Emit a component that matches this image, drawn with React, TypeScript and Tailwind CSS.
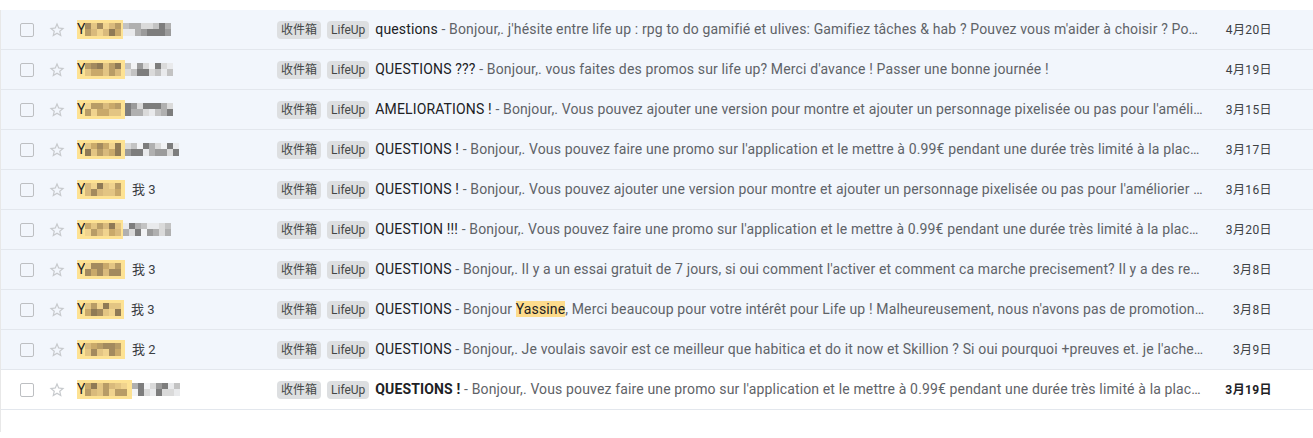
import React from "react";

interface Mail {
  hl: number;
  total: number;
  me?: string;
  subject: string;
  snippet: React.ReactNode;
  date: string;
  unread?: boolean;
}

const mails: Mail[] = [
  {
    hl: 46,
    total: 97,
    subject: "questions",
    snippet:
      "Bonjour,. j'hésite entre life up : rpg to do gamifié et ulives: Gamifiez tâches & hab ? Pouvez vous m'aider à choisir ? Pour ma part je ne sais pas",
    date: "4月20日",
  },
  {
    hl: 48,
    total: 97,
    subject: "QUESTIONS ???",
    snippet: "Bonjour,. vous faites des promos sur life up? Merci d'avance ! Passer une bonne journée !",
    date: "4月19日",
  },
  {
    hl: 48,
    total: 97,
    subject: "AMELIORATIONS !",
    snippet:
      "Bonjour,. Vous pouvez ajouter une version pour montre et ajouter un personnage pixelisée ou pas pour l'amélioration du jeu merci",
    date: "3月15日",
  },
  {
    hl: 48,
    total: 102,
    subject: "QUESTIONS !",
    snippet:
      "Bonjour,. Vous pouvez faire une promo sur l'application et le mettre à 0.99€ pendant une durée très limité à la place de 4.99€ merci",
    date: "3月17日",
  },
  {
    hl: 48,
    total: 48,
    me: "我 3",
    subject: "QUESTIONS !",
    snippet:
      "Bonjour,. Vous pouvez ajouter une version pour montre et ajouter un personnage pixelisée ou pas pour l'améliorier merci beaucoup",
    date: "3月16日",
  },
  {
    hl: 46,
    total: 97,
    subject: "QUESTION !!!",
    snippet:
      "Bonjour,. Vous pouvez faire une promo sur l'application et le mettre à 0.99€ pendant une durée très limité à la place de 4.99€ merci",
    date: "3月20日",
  },
  {
    hl: 48,
    total: 48,
    me: "我 3",
    subject: "QUESTIONS",
    snippet:
      "Bonjour,. Il y a un essai gratuit de 7 jours, si oui comment l'activer et comment ca marche precisement? Il y a des recompenses",
    date: "3月8日",
  },
  {
    hl: 47,
    total: 47,
    me: "我 3",
    subject: "QUESTIONS",
    snippet: (
      <>
        Bonjour <span className="bg-[#fddc8c] text-[#202124]">Yassine</span>, Merci beaucoup pour votre intérêt pour
        Life up ! Malheureusement, nous n'avons pas de promotion en ce moment
      </>
    ),
    date: "3月8日",
  },
  {
    hl: 48,
    total: 48,
    me: "我 2",
    subject: "QUESTIONS",
    snippet:
      "Bonjour,. Je voulais savoir est ce meilleur que habitica et do it now et Skillion ? Si oui pourquoi +preuves et. je l'acheterai merci",
    date: "3月9日",
  },
  {
    hl: 55,
    total: 108,
    subject: "QUESTIONS !",
    snippet:
      "Bonjour,. Vous pouvez faire une promo sur l'application et le mettre à 0.99€ pendant une durée très limité à la place de 4.99€ merci",
    date: "3月19日",
    unread: true,
  },
];

const warm = ["#c9a96a", "#b89c66", "#d9ba7c", "#a38a5e", "#e3c583", "#8f7a55", "#f0d38e"];
const cool = ["#9b9b9b", "#c3c3c3", "#7d7d7d", "#dadada", "#e9eaec", "#b0b0b0", "#f2f3f5"];

const seeded = (seed: number) => {
  let s = seed * 7919 + 13;
  return () => {
    s = (s * 9301 + 49297) % 233280;
    return s / 233280;
  };
};

const Cells = ({ count, palette, rnd }: { count: number; palette: string[]; rnd: () => number }) => (
  <>
    {Array.from({ length: count }).map((_, i) => (
      <div key={i} className="flex w-[6px] flex-col">
        <div className="h-[6px]" style={{ backgroundColor: palette[Math.floor(rnd() * palette.length)] }} />
        <div className="h-[7px]" style={{ backgroundColor: palette[Math.floor(rnd() * palette.length)] }} />
      </div>
    ))}
  </>
);

const Sender = ({ mail, idx }: { mail: Mail; idx: number }) => {
  const rnd = seeded(idx + 1);
  const inner = Math.floor((mail.hl - 8) / 6);
  const outer = Math.floor((mail.total - mail.hl) / 6);
  return (
    <div className="flex w-[200px] shrink-0 items-center text-[14px] text-[#202124]">
      <div className="flex h-[19px] items-center bg-[#fde293]" style={{ width: mail.hl }}>
        <span>Y</span>
        <Cells count={inner} palette={warm} rnd={rnd} />
      </div>
      {outer > 0 && (
        <div className="flex items-center">
          <Cells count={outer} palette={cool} rnd={rnd} />
        </div>
      )}
      {mail.me && <span className="ml-[7px] text-[13px] text-[#3c4043]">{mail.me}</span>}
    </div>
  );
};

const StarOutline = () => (
  <svg viewBox="0 0 24 24" className="h-[18px] w-[18px] shrink-0" fill="#c7cacd">
    <path d="M22 9.24l-7.19-.62L12 2 9.19 8.63 2 9.24l5.46 4.73L5.82 21 12 17.27 18.18 21l-1.63-7.03L22 9.24zM12 15.4l-3.76 2.27 1-4.28-3.32-2.88 4.38-.38L12 6.1l1.71 4.04 4.38.38-3.32 2.88 1 4.28L12 15.4z" />
  </svg>
);

const Chip = ({ children }: { children: React.ReactNode }) => (
  <span className="flex h-[18px] shrink-0 items-center rounded-[4px] bg-[#dddfe1] px-1 text-[12px] text-[#444746]">
    {children}
  </span>
);

const Row = ({ mail, idx }: { mail: Mail; idx: number }) => (
  <div
    className={`flex h-10 items-center border-b border-[#e3e7ed] pl-[19px] pr-[41px] ${
      mail.unread ? "bg-white" : "bg-[#f2f6fc]"
    }`}
  >
    <div className="h-[14px] w-[14px] shrink-0 rounded-[2px] border-[1.5px] border-[#bdbfc2]" />
    <div className="ml-[14px]">
      <StarOutline />
    </div>
    <div className="ml-[11px]">
      <Sender mail={mail} idx={idx} />
    </div>
    <div className="flex shrink-0 items-center gap-[6px]">
      <Chip>收件箱</Chip>
      <Chip>LifeUp</Chip>
    </div>
    <div className="ml-[6px] min-w-0 flex-1 truncate text-[14px] tracking-[0.14px] text-[#5f6368]">
      <span className={`text-[#202124] ${mail.unread ? "font-bold" : ""}`}>{mail.subject}</span> - {mail.snippet}
    </div>
    <div
      className={`w-[67px] shrink-0 text-right text-[12px] tracking-[0.4px] ${
        mail.unread ? "font-bold text-[#202124]" : "text-[#3c4043]"
      }`}
    >
      {mail.date}
    </div>
  </div>
);

export default function App() {
  return (
    <div
      className="h-[438px] w-[1313px] overflow-hidden bg-white pt-[10px]"
      style={{ fontFamily: 'Roboto, "Noto Sans CJK SC", Arial, sans-serif' }}
    >
      <div className="h-[422px] border-l border-[#e8e8e8]">
        {mails.map((mail, idx) => (
          <Row key={idx} mail={mail} idx={idx} />
        ))}
      </div>
    </div>
  );
}
